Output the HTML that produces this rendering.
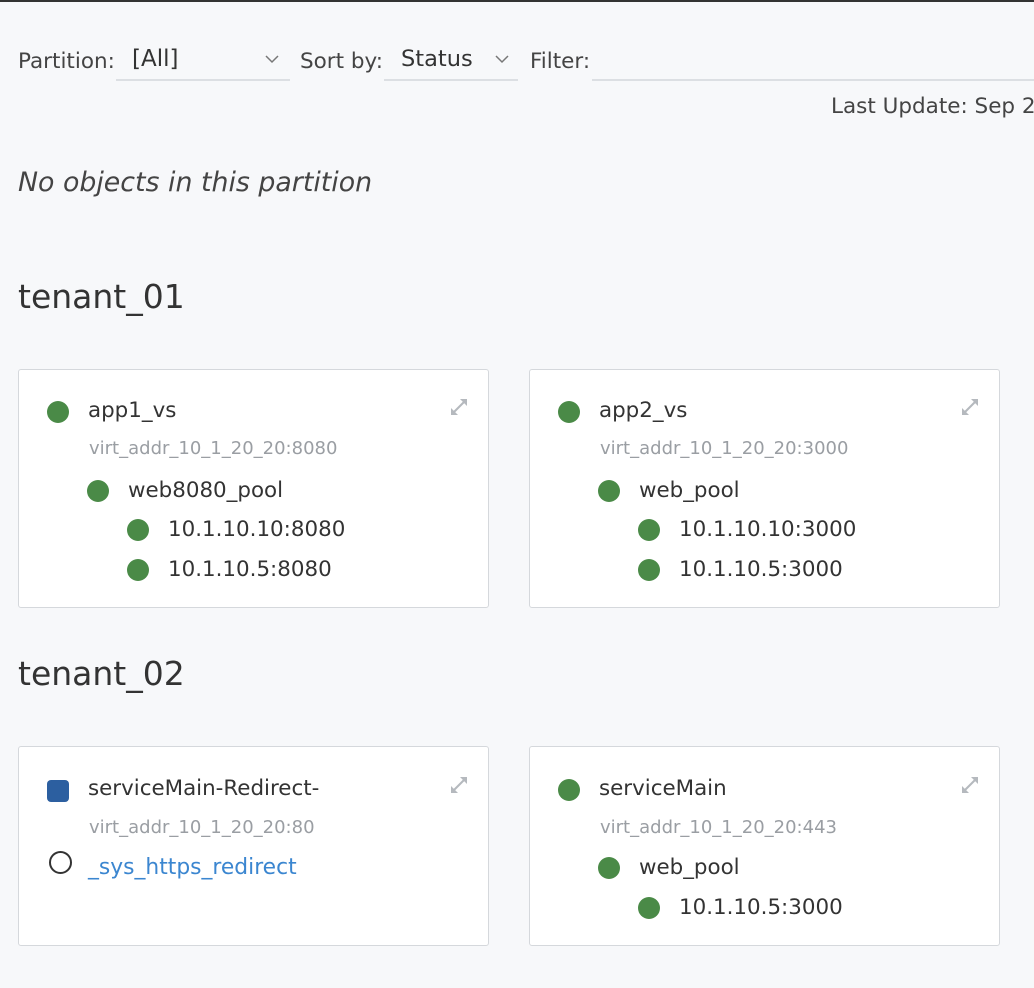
<!DOCTYPE html>
<html><head><style>
body{margin:0;width:1034px;height:988px;background:#f7f8fa;font-family:"DejaVu Sans","Liberation Sans",sans-serif;color:#333;position:relative;overflow:hidden}
.a{position:absolute;white-space:nowrap}
.top{left:0;top:0;width:1034px;height:2px;background:#333}
.lbl{font-size:21.5px;color:#444}
.sel{position:absolute;border-bottom:2px solid #dcdfe3;height:40px}
.card{position:absolute;background:#fff;border:1px solid #d5d8dc;border-radius:3px;width:469px}
.d{position:absolute;width:22px;height:22px;border-radius:50%;background:#4a8a47}
.t{position:absolute;font-size:21.4px;color:#333;white-space:nowrap;line-height:24px}
.s{position:absolute;font-size:18px;color:#9a9ea3;white-space:nowrap;line-height:22px}
.h{font-size:33px;color:#333}
</style></head><body>
<div class="a top"></div>
<div class="a lbl" style="left:18px;top:49px">Partition:</div>
<div class="sel" style="left:116px;top:39px;width:174px"></div>
<div class="a" style="left:132px;top:46px;font-size:23px;color:#333">[All]</div>
<svg class="a" style="left:265px;top:55px" width="14" height="9"><path d="M1 1l6 6 6-6" fill="none" stroke="#777" stroke-width="1.5"/></svg>
<div class="a lbl" style="left:300px;top:49px">Sort by:</div>
<div class="sel" style="left:384px;top:39px;width:134px"></div>
<div class="a" style="left:401px;top:46px;font-size:22.5px;color:#333">Status</div>
<svg class="a" style="left:495px;top:55px" width="14" height="9"><path d="M1 1l6 6 6-6" fill="none" stroke="#777" stroke-width="1.5"/></svg>
<div class="a lbl" style="left:530px;top:49px">Filter:</div>
<div class="sel" style="left:592px;top:39px;width:450px"></div>
<div class="a lbl" style="left:831px;top:94px">Last Update: Sep 2</div>
<div class="a" style="left:18px;top:167px;font-size:26.8px;font-style:italic;color:#444">No objects in this partition</div>
<div class="a h" style="left:18px;top:277px">tenant_01</div>
<div class="a h" style="left:18px;top:654px">tenant_02</div>

<svg width="0" height="0" style="position:absolute"><defs><g id="ex" stroke="#b5b9be" stroke-width="2" fill="#b5b9be"><line x1="3" y1="17" x2="17" y2="3"/><path d="M11 2h7v7z" stroke="none"/><path d="M2 11v7h7z" stroke="none"/></g></defs></svg>

<div class="card" style="left:18px;top:369px;height:237px">
<svg class="a" style="left:430px;top:27px" width="20" height="20"><use href="#ex"/></svg>
<div class="d" style="left:28px;top:31px"></div><div class="t" style="left:69px;top:29px">app1_vs</div>
<div class="s" style="left:70px;top:68px">virt_addr_10_1_20_20:8080</div>
<div class="d" style="left:68px;top:110px"></div><div class="t" style="left:109px;top:109px">web8080_pool</div>
<div class="d" style="left:108px;top:149px"></div><div class="t" style="left:149px;top:148px">10.1.10.10:8080</div>
<div class="d" style="left:108px;top:189px"></div><div class="t" style="left:149px;top:188px">10.1.10.5:8080</div>
</div>
<div class="card" style="left:529px;top:369px;height:237px">
<svg class="a" style="left:430px;top:27px" width="20" height="20"><use href="#ex"/></svg>
<div class="d" style="left:28px;top:31px"></div><div class="t" style="left:69px;top:29px">app2_vs</div>
<div class="s" style="left:70px;top:68px">virt_addr_10_1_20_20:3000</div>
<div class="d" style="left:68px;top:110px"></div><div class="t" style="left:109px;top:109px">web_pool</div>
<div class="d" style="left:108px;top:149px"></div><div class="t" style="left:149px;top:148px">10.1.10.10:3000</div>
<div class="d" style="left:108px;top:189px"></div><div class="t" style="left:149px;top:188px">10.1.10.5:3000</div>
</div>
<div class="card" style="left:18px;top:746px;height:198px">
<svg class="a" style="left:430px;top:28px" width="20" height="20"><use href="#ex"/></svg>
<div class="d" style="left:28px;top:33px;border-radius:4px;background:#2c5fa0"></div><div class="t" style="left:69px;top:30px">serviceMain-Redirect-</div>
<div class="s" style="left:70px;top:70px">virt_addr_10_1_20_20:80</div>
<div class="d" style="left:30px;top:104px;width:19px;height:19px;background:#fff;border:2px solid #333"></div><div class="t" style="left:69px;top:109px;color:#3b86d0;font-size:21.8px">_sys_https_redirect</div>
</div>
<div class="card" style="left:529px;top:746px;height:198px">
<svg class="a" style="left:430px;top:28px" width="20" height="20"><use href="#ex"/></svg>
<div class="d" style="left:28px;top:32px"></div><div class="t" style="left:69px;top:30px">serviceMain</div>
<div class="s" style="left:70px;top:70px">virt_addr_10_1_20_20:443</div>
<div class="d" style="left:68px;top:110px"></div><div class="t" style="left:109px;top:109px">web_pool</div>
<div class="d" style="left:108px;top:150px"></div><div class="t" style="left:149px;top:149px">10.1.10.5:3000</div>
</div>
</body></html>
